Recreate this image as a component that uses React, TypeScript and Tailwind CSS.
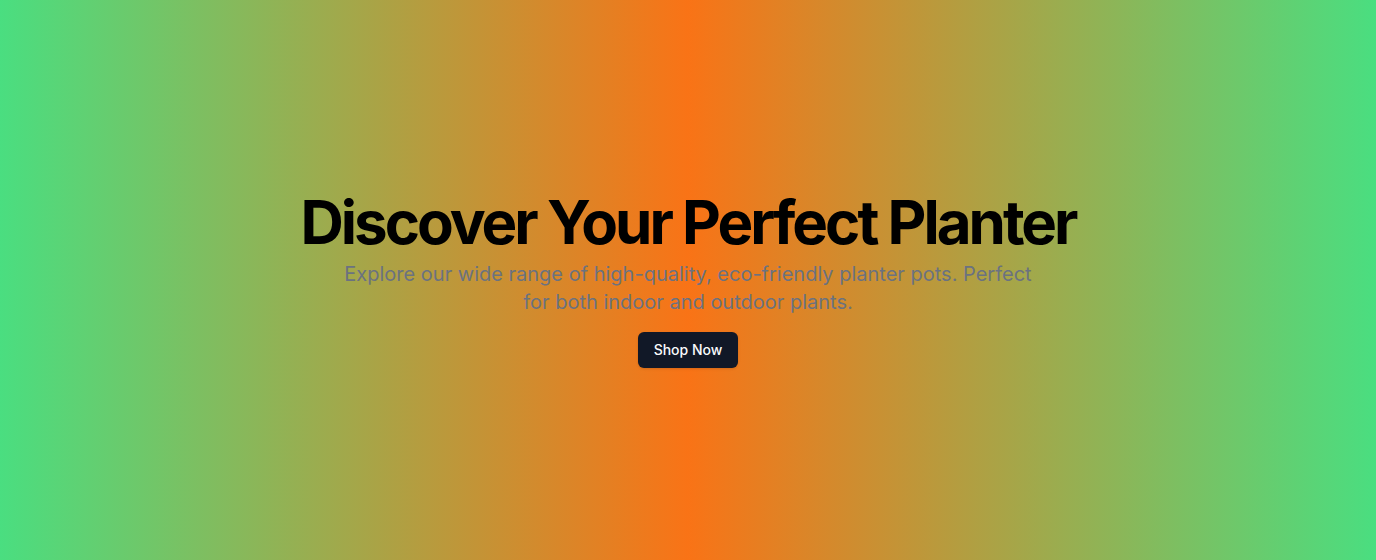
import React from 'react';

const App: React.FC = () => {
  return (
    <section
      className="w-full h-screen flex items-center justify-center bg-[linear-gradient(to_right,#4ade80,#f97316,#4ade80)]"
      style={{ fontFamily: 'Inter, "Liberation Sans", sans-serif' }}
    >
      <div className="flex flex-col items-center text-center space-y-4 px-4">
        <div className="space-y-2">
          <h1 className="text-6xl font-bold tracking-tighter text-black leading-none">
            Discover Your Perfect Planter
          </h1>
          <p className="mx-auto max-w-[700px] text-xl text-[#6b7280]">
            Explore our wide range of high-quality, eco-friendly planter pots. Perfect for both indoor and outdoor plants.
          </p>
        </div>
        <button className="h-9 px-4 rounded-md bg-[#111827] text-[#f9fafb] text-sm font-medium shadow">
          Shop Now
        </button>
      </div>
    </section>
  );
};

export default App;
